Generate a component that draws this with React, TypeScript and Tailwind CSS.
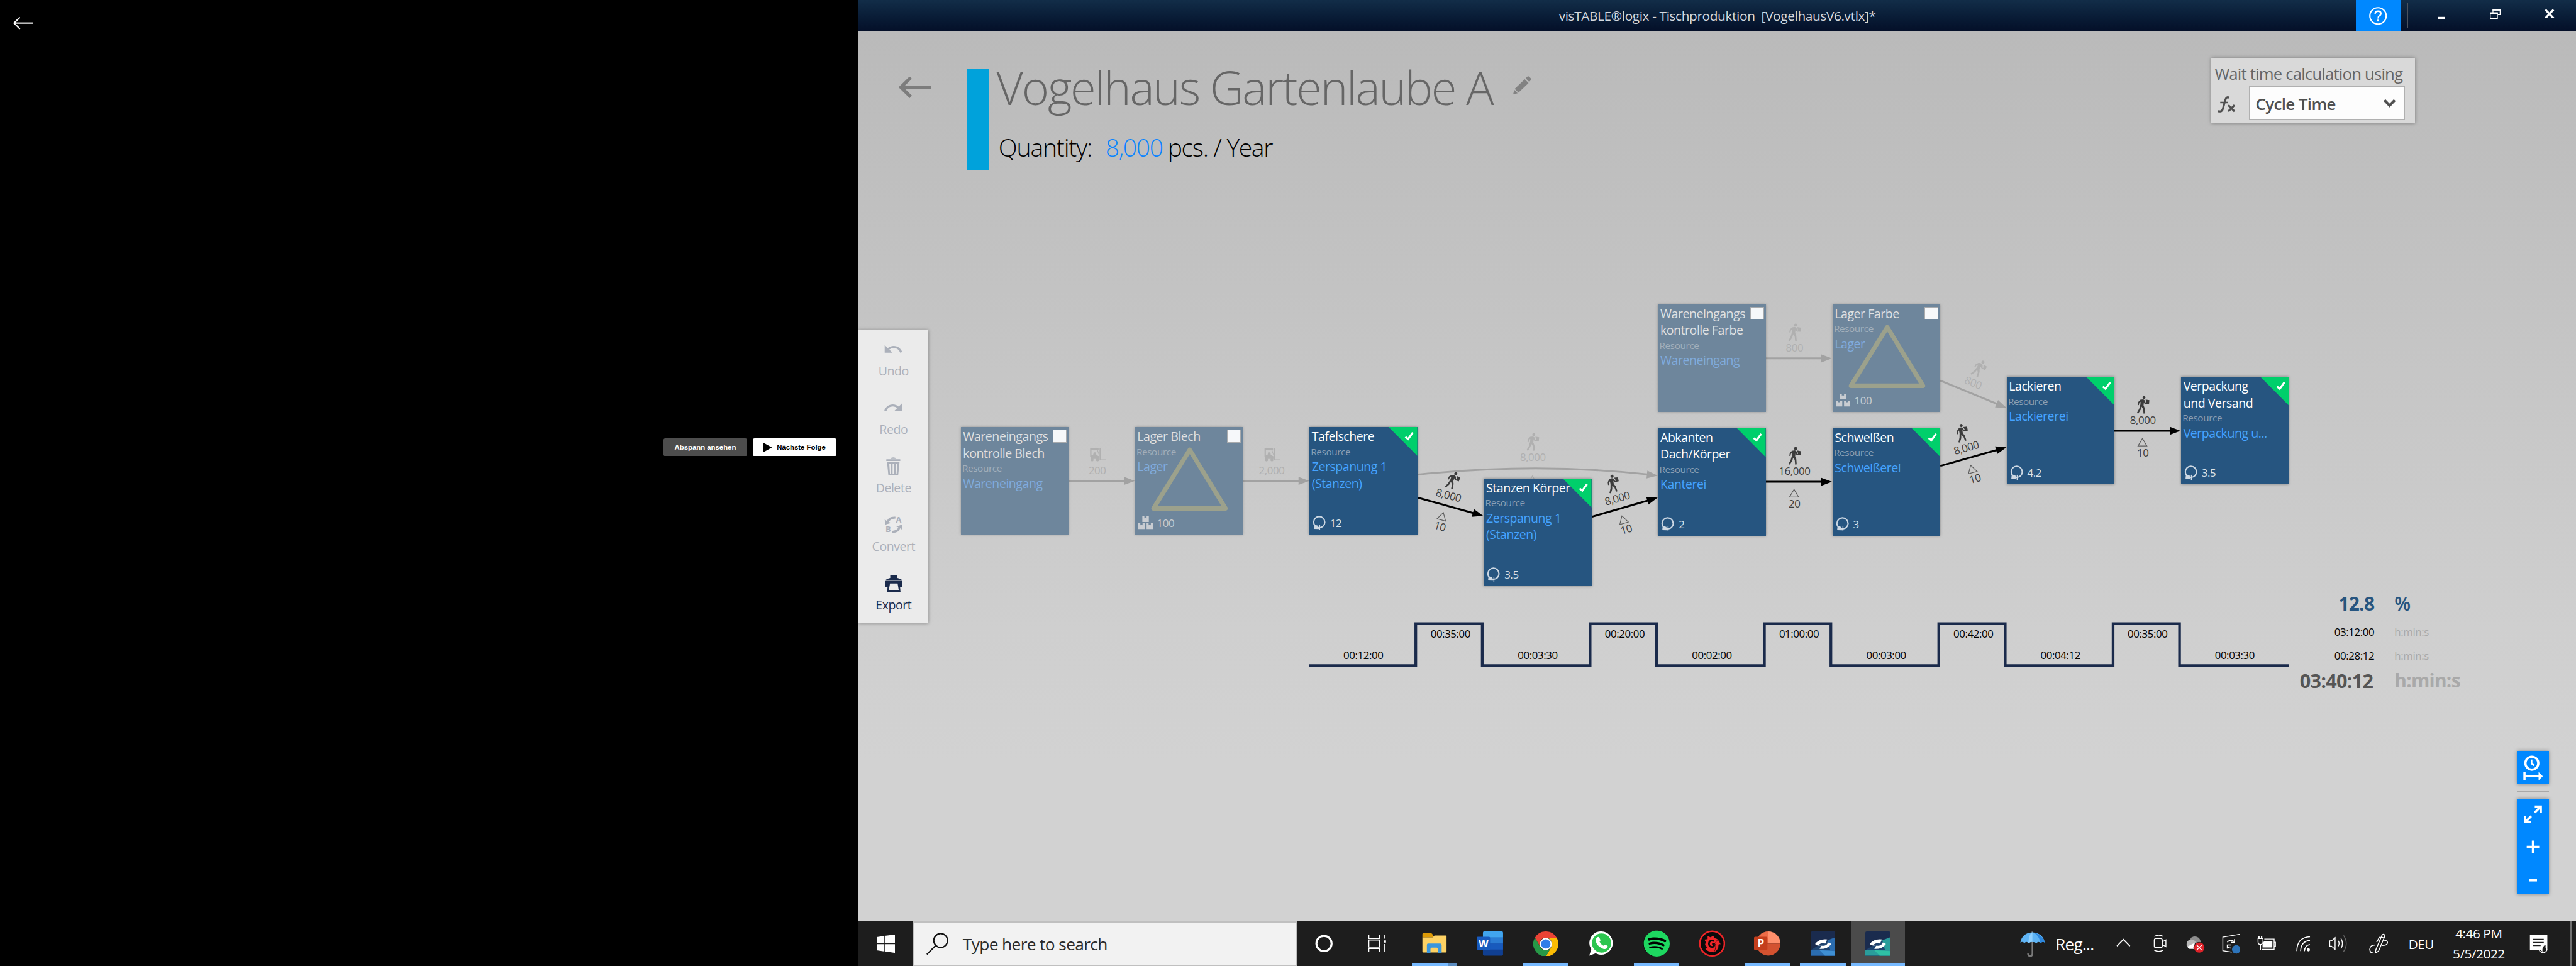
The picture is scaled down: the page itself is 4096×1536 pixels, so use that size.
import React from 'react';
import { MdUndo, MdRedo } from 'react-icons/md';
import { FaSpotify } from 'react-icons/fa';

/* ---------- data ---------- */

type FlowNode = {
  x: number;
  y: number;
  title: string[];
  resource: string[];
  kind: 'active' | 'dim' | 'stock';
  value?: string;
};

const NODES: FlowNode[] = [
  { x: 2148.5, y: 954.5, title: ['Wareneingangs', 'kontrolle Blech'], resource: ['Wareneingang'], kind: 'dim' },
  { x: 2538, y: 954.5, title: ['Lager Blech'], resource: ['Lager'], kind: 'stock', value: '100' },
  { x: 2928, y: 954.5, title: ['Tafelschere'], resource: ['Zerspanung 1', '(Stanzen)'], kind: 'active', value: '12' },
  { x: 3318, y: 1069.5, title: ['Stanzen Körper'], resource: ['Zerspanung 1', '(Stanzen)'], kind: 'active', value: '3.5' },
  { x: 3707.5, y: 680, title: ['Wareneingangs', 'kontrolle Farbe'], resource: ['Wareneingang'], kind: 'dim' },
  { x: 4097.5, y: 680, title: ['Lager Farbe'], resource: ['Lager'], kind: 'stock', value: '100' },
  { x: 3707.5, y: 957, title: ['Abkanten', 'Dach/Körper'], resource: ['Kanterei'], kind: 'active', value: '2' },
  { x: 4097.5, y: 957, title: ['Schweißen'], resource: ['Schweißerei'], kind: 'active', value: '3' },
  { x: 4487, y: 842, title: ['Lackieren'], resource: ['Lackiererei'], kind: 'active', value: '4.2' },
  { x: 4877, y: 842, title: ['Verpackung', 'und Versand'], resource: ['Verpackung u...'], kind: 'active', value: '3.5' },
];

type Edge = {
  from: [number, number];
  to: [number, number];
  label: string;
  batch?: string;
  dim?: boolean;
  lift?: boolean;
};

const EDGES: Edge[] = [
  { from: [2390, 1075], to: [2538, 1075], label: '200', dim: true, lift: true },
  { from: [2780, 1075], to: [2928, 1075], label: '2,000', dim: true, lift: true },
  { from: [3949, 801], to: [4097, 801], label: '800', dim: true },
  { from: [4339, 850.5], to: [4487, 911.5], label: '800', dim: true },
  { from: [3169, 1112], to: [3317, 1153], label: '8,000', batch: '10' },
  { from: [3559, 1155.5], to: [3707, 1112.5], label: '8,000', batch: '10' },
  { from: [3949, 1077], to: [4097, 1077], label: '16,000', batch: '20' },
  { from: [4339, 1041.5], to: [4487, 1000], label: '8,000', batch: '10' },
  { from: [4728, 963], to: [4876, 963], label: '8,000', batch: '10' },
];

const TIMES = [
  { t: '00:12:00', high: false },
  { t: '00:35:00', high: true },
  { t: '00:03:30', high: false },
  { t: '00:20:00', high: true },
  { t: '00:02:00', high: false },
  { t: '01:00:00', high: true },
  { t: '00:03:00', high: false },
  { t: '00:42:00', high: true },
  { t: '00:04:12', high: false },
  { t: '00:35:00', high: true },
  { t: '00:03:30', high: false },
];

/* ---------- diagram icons ---------- */

const Walker = () => (
  <g>
    <circle cx="16" cy="3.6" r="3.4" />
    <path d="M8 8.5 L14.5 7.5 L18 10 L19.5 15 L22 16.5 L21 18.5 L17 17 L15.8 14 L15 21 L17.5 27 L18.5 39 L15 39.5 L14 29 L10.5 24 L8.5 31 L3 39.5 L0 38 L5 29 L8 19 L8.2 13 L5.5 15.5 L4.5 20.5 L2 20 L3 13.5 Z" />
    <path d="M19.5 8 L28 9.5 L27.2 18.5 L20.8 18 L21.5 15.2 Z" />
  </g>
);

const Lift = () => (
  <g>
    <path d="M1 1 H20 V4 H18 L22 17 H21 L16 4 H4 V20 H1 Z" />
    <path d="M22 0 H25 V26 H36 V28 H22 Z" />
    <path d="M2 18 L8 15 L9 10 H14 L15 16 L21 19 V25 H2 Z" />
    <circle cx="5.5" cy="27" r="3.4" />
    <circle cx="17.5" cy="27" r="3.4" />
  </g>
);

function EdgeMark({ e }: { e: Edge }) {
  const [x1, y1] = e.from;
  const [x2, y2] = e.to;
  const len = Math.hypot(x2 - x1, y2 - y1);
  const deg = (Math.atan2(y2 - y1, x2 - x1) * 180) / Math.PI;
  const mid = len / 2 - 10;
  const line = e.dim ? '#a2a2a2' : '#000000';
  return (
    <g transform={`translate(${x1} ${y1}) rotate(${deg})`}>
      <path d={`M0 0 H${len - 22}`} stroke={line} strokeWidth="4.2" />
      <path d={`M${len} 0 L${len - 24} -9 V9 Z`} fill={line} />
      <g fill={e.dim ? '#b0b0b0' : '#3c3c3c'}>
        <g transform={e.lift ? `translate(${mid - 17} -74)` : `translate(${mid - 13.5} -78)`}>
          {e.lift ? <Lift /> : <Walker />}
        </g>
        <text x={mid} y="-15" textAnchor="middle" className="text-[23.7px]">
          {e.label}
        </text>
      </g>
      {e.batch && (
        <g>
          <path
            d={`M${mid - 1} 17 L${mid + 9} 34 L${mid - 11} 34 Z`}
            fill="none"
            stroke="#5c5c5c"
            strokeWidth="1.7"
          />
          <text x={mid} y="57" textAnchor="middle" fill="#3c3c3c" className="text-[23.7px]">
            {e.batch}
          </text>
        </g>
      )}
    </g>
  );
}

const timelinePath = () => {
  let d = 'M2928 1488';
  for (let i = 0; i < 5; i++) {
    const nx = 2928 + 389.8 * i;
    d += ` H${nx + 238.2} V1394 H${nx + 386.8} V1488`;
  }
  return d + ' H5118';
};

function NodeCard({ n }: { n: FlowNode }) {
  const active = n.kind === 'active';
  return (
    <div
      className={
        active
          ? 'absolute h-[241px] w-[241px] bg-[#265580] shadow-[0_0_6px_rgba(0,0,0,0.35)]'
          : 'absolute h-[241px] w-[241px] bg-[#6e869c] shadow-[0_0_6px_rgba(0,0,0,0.25)]'
      }
      style={{ left: n.x - 1920, top: n.y - 70 }}
    >
      {n.kind === 'stock' && (
        <svg className="absolute inset-0" width="241" height="241" fill="none">
          <path d="M122 51 L202 182 H41 Z" stroke="#9ca18c" strokeWidth="10" strokeLinejoin="round" />
        </svg>
      )}
      {active ? (
        <svg className="absolute top-0 right-0" width="64" height="65">
          <path d="M0 0 H64 V64.500 Z" fill="#00cf6b" />
          <path d="M37.500 22 L43.500 27 L54 12.500" fill="none" stroke="#fff" strokeWidth="4.500" />
        </svg>
      ) : (
        <div className="absolute top-[6px] right-[4px] h-[29px] w-[31px] border-2 border-[#a9abad] bg-[#f6f8fa]" />
      )}
      <div className="relative flex flex-col pt-[3px] whitespace-nowrap">
        <div className={active ? 'pl-[5px] text-[27.500px] leading-[37.500px] text-white' : 'pl-[5px] text-[27.500px] leading-[37.500px] text-[#e0e1e2]'}>
          {n.title.map((t) => (
            <div key={t}>{t}</div>
          ))}
        </div>
        <div className={active ? 'pl-[3px] text-[21.500px] leading-[29px] text-[#8a9fb4]' : 'pl-[3px] text-[21.500px] leading-[29px] text-[#a2afbb]'}>
          Resource
        </div>
        <div className={active ? 'pt-px pl-[5px] text-[27.500px] leading-[37.500px] text-[#45a3ff]' : 'pt-px pl-[5px] text-[27.500px] leading-[37.500px] text-[#80abdc]'}>
          {n.resource.map((t) => (
            <div key={t}>{t}</div>
          ))}
        </div>
      </div>
      {n.value && (
        <div className="absolute bottom-[8px] left-[7px] flex h-[36px] items-center gap-[9px]">
          {active ? (
            <svg width="30" height="33" viewBox="0 0 30 33" className="shrink-0">
              <circle cx="15" cy="14.500" r="12.500" fill="none" stroke="#cdd8e3" strokeWidth="3" />
              <path d="M4 20 L12 22 L14.500 30 L3 29.500 Z" fill="#cdd8e3" />
              <path d="M16 21 V32.500" stroke="#cdd8e3" strokeWidth="2" />
            </svg>
          ) : (
            <svg width="33" height="29" viewBox="0 0 33 29" className="shrink-0" fill="#c9cdd2">
              <path d="M9 0 H13.500 V4.500 L16 3 L18.500 4.500 V0 H23.500 V12.500 H9 Z" />
              <path d="M0 15.500 H4.500 V20 L7 18.500 L9.500 20 V15.500 H14.500 V28.500 H0 Z" />
              <path d="M18.500 15.500 H23 V20 L25.500 18.500 L28 20 V15.500 H33 V28.500 H18.500 Z" />
            </svg>
          )}
          <span className={active ? 'text-[23.700px] leading-[36px] text-[#dbe3ea]' : 'text-[23.700px] leading-[36px] text-[#c9cdd1]'}>
            {n.value}
          </span>
        </div>
      )}
    </div>
  );
}

function Canvas() {
  return (
    <div className="absolute inset-0">
      <svg className="absolute inset-0" width="3840" height="1990" viewBox="1920 70 3840 1990">
        <path d="M3169 1061 Q3438 1033 3690 1061" fill="none" stroke="#a2a2a2" strokeWidth="4" />
        <path d="M3707 1063 L3684 1052 L3682 1069.500 Z" fill="#a2a2a2" />
        <g fill="#b0b0b0">
          <g transform="translate(3414 968)">
            <Walker />
          </g>
          <text x="3428" y="1031" textAnchor="middle" className="text-[23.7px]">
            8,000
          </text>
          <path d="M3427 1064 L3437 1081 H3417 Z" fill="none" stroke="#b0b0b0" strokeWidth="1.800" />
        </g>
        {EDGES.map((e, i) => (
          <EdgeMark key={i} e={e} />
        ))}
        <path d={timelinePath()} fill="none" stroke="#1a2a4b" strokeWidth="6" />
      </svg>

      {NODES.map((n, i) => (
        <NodeCard key={i} n={n} />
      ))}

      <div className="absolute top-[1331px] left-[1008px] flex h-[84px] text-[23.700px] leading-[35px] text-black">
        {TIMES.map((s, i) =>
          s.high ? (
            <div key={i} className="w-[148.700px] text-center">
              {s.t}
            </div>
          ) : (
            <div key={i} className="w-[241px] pt-[48px] text-center">
              {s.t}
            </div>
          ),
        )}
      </div>

      <div className="absolute top-[1250px] left-[3189px] grid grid-cols-[200px_200px] gap-x-[45px] whitespace-nowrap">
        <div className="mb-[7px] text-right text-[42px] leading-[60px] font-bold text-[#265580]">12.8</div>
        <div className="mb-[7px] text-[42px] leading-[60px] font-semibold text-[#265580]">%</div>
        <div className="text-right text-[23.700px] leading-[52.500px] text-black">03:12:00</div>
        <div className="text-[23.700px] leading-[52.500px] text-[#a9a9a9]">h:min:s</div>
        <div className="text-right text-[23.700px] leading-[52.500px] text-black">00:28:12</div>
        <div className="text-[23.700px] leading-[52.500px] text-[#a9a9a9]">h:min:s</div>
        <div className="pr-[3px] text-right text-[43px] leading-[60px] font-bold text-[#555555]">03:40:12</div>
        <div className="text-[42px] leading-[60px] font-bold text-[#a9a9a9]">h:min:s</div>
      </div>
    </div>
  );
}

/* ---------- tool strip ---------- */

const TrashIcon = () => (
  <svg width="32" height="40" viewBox="0 0 32 40" fill="#abb0ba">
    <path d="M11 1.500 Q16 -1 21 1.500 V4 H11 Z" />
    <rect x="0" y="4.500" width="32" height="4" rx="1.500" />
    <path fillRule="evenodd" d="M2 10.500 H30 L27 40 H5 Z M7 14 L8.500 36.500 H10.500 L10 14 Z M14.500 14 V36.500 H17.500 V14 Z M22 14 L21.500 36.500 H23.500 L25 14 Z" />
  </svg>
);

const ConvertIcon = () => (
  <svg width="56" height="60" viewBox="-8 -12 56 60" fill="#abb0ba" className="shrink-0">
    <path d="M24 0 Q8 -1 5.500 10 L0 6 L1.500 18 L14 14 L9.500 12 Q12 5 24 4 Z" />
    <path d="M16 36 Q32 37 34.500 26 L40 30 L38.500 18 L26 22 L30.500 24 Q28 31 16 32 Z" />
    <text x="25" y="13.500" className="text-[18px] font-bold">A</text>
    <text x="2" y="34.500" className="text-[18px] font-bold">B</text>
  </svg>
);

const PrinterIcon = () => (
  <svg width="40" height="37" viewBox="0 0 40 37" fill="#1a2a4b">
    <path d="M12 0 H28 V5.500 Q35 6.500 38 10 H2 Q5 6.500 12 5.500 Z" />
    <path fillRule="evenodd" d="M3 12 H37 Q40 12 40 15 V24 Q40 26 37 26 H34 L35 36.500 H5 L6 26 H3 Q0 26 0 24 V15 Q0 12 3 12 Z M11.500 18 L9 32.500 H31 L28.500 18 Z" />
  </svg>
);

const TOOLS = [
  { label: 'Undo', icon: <MdUndo size={46} />, on: false },
  { label: 'Redo', icon: <MdRedo size={46} />, on: false },
  { label: 'Delete', icon: <TrashIcon />, on: false },
  { label: 'Convert', icon: <ConvertIcon />, on: false },
  { label: 'Export', icon: <PrinterIcon />, on: true },
];

function ToolStrip() {
  return (
    <div className="flex h-[655px] w-[156px] shrink-0 flex-col bg-[#ebebeb] shadow-[0_0_8px_rgba(0,0,0,0.35)]">
      {TOOLS.map((t) => (
        <div
          key={t.label}
          className={t.on ? 'flex h-[131px] flex-col items-center text-[#1a2a4b]' : 'flex h-[131px] flex-col items-center text-[#abb0ba]'}
        >
          <div className="mt-[20px] flex h-[46px] items-center justify-center">{t.icon}</div>
          <div className="mt-[7px] text-[27.500px] leading-[36px]">{t.label}</div>
        </div>
      ))}
    </div>
  );
}

/* ---------- chrome ---------- */

function TitleBar() {
  return (
    <div className="flex h-[70px] shrink-0 items-center bg-linear-to-b from-[#122d48] to-[#040f28] text-white">
      <div className="w-[492px] shrink-0" />
      <div className="flex-1 pt-[2px] text-center text-[29.300px] whitespace-pre text-[#d5d9de]">
        <span className="tracking-[-0.018em]!">{'visTABLE®logix - Tischproduktion  [VogelhausV6.vtlx]*'}</span>
      </div>
      <div className="flex w-[492px] shrink-0 items-center">
        <div className="flex h-[70px] w-[100px] items-center justify-center bg-[#0088ff]">
          <svg width="40" height="40" viewBox="0 0 40 40" fill="none" stroke="#fff">
            <circle cx="20" cy="20" r="18.300" strokeWidth="3" />
            <path d="M13.500 15.500 Q13.500 9.500 20 9.500 Q26.500 9.500 26.500 15 Q26.500 18 22.500 20 Q20 21.500 20 26" strokeWidth="3.200" />
            <path d="M20 28.500 V32.500" strokeWidth="3.600" />
          </svg>
        </div>
        <div className="ml-[15px] h-[55px] w-[2px] bg-[#4b525d]" />
        <svg className="ml-[67px]" width="16" height="30" viewBox="0 0 16 30">
          <rect x="0" y="18" width="16" height="4.500" fill="#fff" />
        </svg>
        <svg className="mt-[-8px] ml-[100px]" width="24" height="24" viewBox="0 0 24 24" fill="none" stroke="#fff">
          <path d="M7 9 V2.500 H23 V13 H18" strokeWidth="1.800" />
          <path d="M6 2 H24" strokeWidth="4" />
          <path d="M1 9 H17 V21.500 H1 Z" strokeWidth="1.800" />
          <path d="M0 10 H18" strokeWidth="4" />
        </svg>
        <svg className="mt-[-9px] ml-[98px]" width="22" height="20" viewBox="0 0 22 20" stroke="#fff" strokeWidth="4.500">
          <path d="M2 0.500 L20 19.500 M20 0.500 L2 19.500" />
        </svg>
      </div>
    </div>
  );
}

function Header() {
  return (
    <div className="flex h-[330px] items-start pt-[60px]">
      <svg className="mt-[42px] ml-[90px] shrink-0" width="72" height="47" viewBox="0 0 72 47" fill="none" stroke="#7d7d7d" strokeWidth="7.500">
        <path d="M4 23.500 H72" />
        <path d="M27 2 L5 23.500 L27 45" />
      </svg>
      <div className="mt-[25px] ml-[79px] h-[226px] w-[50px] shrink-0 bg-[#00a2db]" />
      <div className="mt-[25px] ml-[17px] flex flex-col whitespace-nowrap">
        <div className="flex items-start">
          <h1 className="w-[1156px] pt-[2px] text-[104px] leading-[75px] font-light tracking-[-0.030em]! text-[#666666]">Vogelhaus Gartenlaube A</h1>
          <svg className="mt-[15px] shrink-0" width="41" height="41" viewBox="0 0 41 41" fill="#828282">
            <path d="M32 1 Q34 -0.500 36 1.500 L40 5.500 Q41 7.500 39.500 9 L36 13 L28 5 Z" />
            <path d="M26 7 L34.500 15.500 L12 37 L3.500 28.500 Z" />
            <path d="M2.500 30.500 L10 38.500 L0 41 Z" />
          </svg>
        </div>
        <div className="mt-[68px] flex pl-[5px] text-[55px] leading-[60px] font-light text-black">
          <span className="w-[239px] tracking-[-0.031em]!">Quantity:</span>
          <span className="w-[139px] tracking-[-0.034em]! text-[#0a84ff]">8,000</span>
          <span className="tracking-[-0.034em]!">pcs. / Year</span>
        </div>
      </div>
      <div className="mr-[360px] ml-auto flex h-[146px] w-[456px] flex-col bg-[#d9d9d9] pl-[8px] shadow-[0_0_8px_rgba(0,0,0,0.35)]">
        <div className="mt-[10px] text-[36.200px] leading-[50px] tracking-[-0.032em]! whitespace-nowrap text-[#666666]">
          Wait time calculation using
        </div>
        <div className="mt-[3px] flex items-start">
          <svg className="mt-[22px] ml-[7px] shrink-0" width="40" height="37" viewBox="0 0 40 37" fill="none" stroke="#505050">
            <path d="M26 3.500 Q20 0 17.500 8 L12 28 Q9.500 36 1 33.500" strokeWidth="4.500" />
            <path d="M6 14 H23" strokeWidth="3.500" />
            <path d="M24 20 L38 34 M38 20 L24 34" strokeWidth="4.500" />
          </svg>
          <div className="ml-[30px] flex h-[75px] w-[349px] items-center justify-between border-2 border-[#b0b0b0] bg-[#fdfdfd] pr-[20px] pl-[13px]">
            <span className="pt-[4px] text-[36.500px] font-semibold whitespace-nowrap text-[#505050]">Cycle Time</span>
            <svg width="27" height="20" viewBox="0 0 27 20" fill="none" stroke="#505050" strokeWidth="6">
              <path d="M2 3 L13.500 15 L25 3" />
            </svg>
          </div>
        </div>
      </div>
    </div>
  );
}

function ZoomControls() {
  return (
    <div className="mr-[60px] ml-auto flex w-[72px] flex-col">
      <div className="flex h-[75px] items-start justify-center bg-[#0088ff] shadow-[0_0_8px_rgba(0,0,0,0.35)]">
        <svg width="72" height="75" viewBox="0 0 72 75" fill="none" stroke="#fff">
          <circle cx="33.500" cy="27.500" r="14.500" strokeWidth="5" />
          <path d="M33 19.500 V28.500 L39 32.500" strokeWidth="3.500" />
          <path d="M17 47 V66" strokeWidth="5" />
          <path d="M17 56.500 H50" strokeWidth="4.500" />
          <path d="M48.500 47 L58 56.500 L48.500 66 Z" fill="#fff" stroke="none" />
        </svg>
      </div>
      <div className="mt-[15px] h-[2px] bg-[#a8a8a8]" />
      <div className="mt-[15px] flex h-[214px] flex-col bg-[#0088ff] shadow-[0_0_8px_rgba(0,0,0,0.35)]">
        <svg width="72" height="214" viewBox="0 0 72 214" fill="none" stroke="#fff" strokeWidth="5">
          <path d="M40 17.500 H53.500 V31 M53 18 L40 31" />
          <path d="M18.500 39 V52.500 H32 M19 52 L32 39" />
          <path d="M22 107.500 H50 M36 93.500 V122" />
          <path d="M28 182.500 H45" />
        </svg>
      </div>
    </div>
  );
}

/* ---------- taskbar ---------- */

const Explorer = () => (
  <svg width="56" height="46" viewBox="0 0 56 46">
    <path d="M1 2 Q1 0 3 0 H20 Q23 0 24 3 L27 9 H1 Z" fill="#dd9a06" />
    <path d="M1 9 H24 L28 5 H53 Q55 5 55 7 V41 Q55 43 53 43 H3 Q1 43 1 41 Z" fill="#fdd264" />
    <path d="M11 45 V26 Q11 23 14 23 H41 Q44 23 44 26 V45 H36 V35 Q36 32 33 32 H22 Q19 32 19 35 V45 Z" fill="#3a96dd" />
  </svg>
);

const Word = () => (
  <svg width="60" height="54" viewBox="0 0 60 54">
    <rect x="14" width="45" height="54" rx="3" fill="#103f91" />
    <path d="M14 27 H59 V40.500 H14 Z" fill="#185abd" />
    <path d="M14 13 H59 V27 H14 Z" fill="#2b7cd3" />
    <path d="M14 13.500 V3 Q14 0 17 0 H56 Q59 0 59 3 V13.500 Z" fill="#41a5ee" />
    <rect y="12" width="30" height="30" rx="2.500" fill="#185abd" />
    <text x="15" y="35" textAnchor="middle" fill="#fff" className="text-[23px] font-bold">W</text>
  </svg>
);

const Chrome = () => (
  <svg width="56" height="56" viewBox="0 0 48 48">
    <path d="M3.200 12 A24 24 0 0 1 44.800 12 H24 A12 12 0 0 0 13.600 30 Z" fill="#ea4335" />
    <path d="M44.800 12 A24 24 0 0 1 24 48 L34.400 30 A12 12 0 0 0 24 12 Z" fill="#fbbc04" />
    <path d="M24 48 A24 24 0 0 1 3.200 12 L13.600 30 A12 12 0 0 0 34.400 30 Z" fill="#279847" />
    <circle cx="24" cy="24" r="11.500" fill="#fff" />
    <circle cx="24" cy="24" r="9" fill="#2f7de9" />
  </svg>
);

const WhatsApp = () => (
  <svg width="54" height="54" viewBox="0 0 54 54">
    <path d="M27.500 0 A26 26 0 1 1 14.500 49 L0 54 L4.500 40 A26 26 0 0 1 27.500 0 Z" fill="#fff" />
    <circle cx="27.500" cy="26" r="21.500" fill="#2cc64f" />
    <path d="M18 13 Q20 11.500 22 13 L25 19 Q25.500 21 23 23 Q25.500 29 31.500 32 L34.500 29.500 Q36 29 41 32.500 Q42 35 39 38 Q35 41 28 37.500 Q17 32 14.500 22 Q14 16 18 13 Z" fill="#fff" />
  </svg>
);

const Spotify = () => (
  <div className="flex h-[58px] w-[58px] items-center justify-center rounded-full bg-black">
    <FaSpotify size={60} color="#1ed760" className="shrink-0" />
  </div>
);

const RedApp = () => (
  <svg width="60" height="60" viewBox="0 0 60 60">
    <circle cx="30" cy="30" r="27.500" fill="#0a0a0a" stroke="#ee2528" strokeWidth="3.500" />
    <path d="M20 13 L27 16 L32 12 L36 18 L42 20 L41 27 H46 L44 33 Q46 44 33 48 Q22 50 15 42 L19 38 L14 33 L16 27 L13 21 L20 20 Z" fill="#ee2528" />
    <path d="M34 24 Q24 21 23 30 Q23 38 31 37.500 Q35 37 35 31 H30" fill="none" stroke="#0a0a0a" strokeWidth="4" />
    <path d="M43 20 L50 32 H45 Q45 46 32 51 Q39 44 38 32 H35 Z" fill="#ee2528" stroke="#0a0a0a" strokeWidth="1" />
  </svg>
);

const PowerPoint = () => (
  <svg width="60" height="54" viewBox="0 0 60 54">
    <path d="M32 0 A27 27 0 0 0 5 27 H32 Z" fill="#ed6c47" />
    <path d="M32 0 A27 27 0 0 1 59 27 H32 Z" fill="#ff8f6b" />
    <path d="M5 27 A27 27 0 0 0 59 27 Z" fill="#d35230" />
    <rect y="12" width="30" height="30" rx="2.500" fill="#c43e1c" />
    <text x="15" y="35.500" textAnchor="middle" fill="#fff" className="text-[24px] font-bold">P</text>
  </svg>
);

function Logix({ accent, light }: { accent: string; light: string }) {
  return (
    <svg width="56" height="56" viewBox="0 0 56 56">
      <rect width="56" height="56" rx="3" fill="#1a2b4e" />
      <path d="M56 13 L36 20 L0 42 V54 H56 Z" fill="#1f4470" />
      <path d="M56 13 L38 20 L44 42 H56 Z" fill={accent} />
      <path d="M0 42 H56 V54 H0 Z" fill={accent} />
      <path d="M20 42 L56 44 V54 H32 Z" fill={light} />
      <path d="M10 28 Q20 16 37 18 L33 27 Q22 25 18 31 L24 31 Q14 33 10 28 Z" fill="#fff" />
      <path d="M46 28 Q38 40 20 39 L24 32 Q34 33 38 27 L33 26 Q42 23 46 28 Z" fill="#fff" />
    </svg>
  );
}

const APPS: { icon: React.ReactNode; state: 'idle' | 'open' | 'stack' | 'focus' }[] = [
  { icon: <Explorer />, state: 'stack' },
  { icon: <Word />, state: 'idle' },
  { icon: <Chrome />, state: 'open' },
  { icon: <WhatsApp />, state: 'idle' },
  { icon: <Spotify />, state: 'open' },
  { icon: <RedApp />, state: 'idle' },
  { icon: <PowerPoint />, state: 'open' },
  { icon: <Logix accent="#2b6cae" light="#3f8fd2" />, state: 'open' },
  { icon: <Logix accent="#2a9d9b" light="#2fc0a5" />, state: 'focus' },
];

function Taskbar() {
  return (
    <div className="flex h-[100px] shrink-0 items-center bg-[#1d1d1d] text-white">
      <div className="flex h-full w-[121px] shrink-0 items-center justify-center">
        <svg width="41" height="41" viewBox="0 0 41 41" fill="#fff">
          <path d="M0 5.500 L16 3.200 V19.300 H0 Z M18 2.900 L41 0 V19.300 H18 Z M0 21.300 H16 V37.500 L0 35.300 Z M18 21.300 H41 V41 L18 37.800 Z" />
        </svg>
      </div>
      <div className="flex h-full w-[859px] shrink-0 items-center border-[3px] border-[#c0c0c0] bg-[#f2f2f2] pl-[28px]">
        <svg width="50" height="50" viewBox="0 0 50 50" fill="none" stroke="#111" strokeWidth="3">
          <circle cx="32" cy="17.500" r="15.500" />
          <path d="M21 28.500 L1 48.500" />
        </svg>
        <span className="pt-[4px] pl-[31px] text-[37px] whitespace-nowrap text-[#2b2b2b]">Type here to search</span>
      </div>
      <div className="flex w-[120px] shrink-0 justify-center">
        <svg width="40" height="40" viewBox="0 0 40 40" fill="none" stroke="#fff" strokeWidth="4.500">
          <circle cx="20" cy="20" r="17" />
        </svg>
      </div>
      <div className="flex w-[126px] shrink-0 pl-[39px]">
        <svg width="42" height="40" viewBox="0 0 42 40" fill="none" stroke="#fff" strokeWidth="2.500">
          <path d="M2 1 V8.500 H26 V1 M2 39 V31 H26 V39 M2 12 H26 V28 H2 Z M38 0 V9 M38 21 V39" />
          <rect x="36" y="13" width="4.500" height="5" fill="#fff" stroke="none" />
        </svg>
      </div>
      {APPS.map((a, i) => (
        <div
          key={i}
          className={
            a.state === 'focus'
              ? 'relative mr-px ml-px flex h-full w-[121px] shrink-0 items-center justify-center bg-[#4b4b4b]'
              : 'relative flex h-full w-[124px] shrink-0 items-center justify-center'
          }
        >
          {a.icon}
          {a.state === 'focus' && <div className="absolute right-0 bottom-0 left-0 h-[5px] bg-[#76b9ff]" />}
          {a.state === 'open' && <div className="absolute right-[11px] bottom-0 left-[11px] h-[5px] bg-[#76b9ff]" />}
          {a.state === 'stack' && (
            <div className="absolute right-[11px] bottom-0 left-[11px] flex h-[5px]">
              <div className="flex-1 bg-[#76b9ff]" />
              <div className="w-[22px] bg-[#5b8cc0]" />
            </div>
          )}
        </div>
      ))}

      <svg className="ml-[254px] shrink-0" width="60" height="60" viewBox="0 0 60 60">
        <path d="M29 3 V52 Q29 58 24 58 Q19 58 19 51" fill="none" stroke="#7a7a7a" strokeWidth="3.500" />
        <path d="M2 28 Q6 6 29 5 Q52 6 57 28 Q52 24 47 29 Q43 24 38 29 Q29 24 20 29 Q16 24 11 29 Q7 24 2 28 Z" fill="#5fb4f4" />
        <path d="M29 5 Q21 8 20 29 Q29 24 29 27 Z" fill="#8fd0ff" />
        <path d="M29 5 Q50 8 57 28 Q52 24 47 29 Q44 10 29 5 Z" fill="#2c86dd" />
      </svg>
      <div className="ml-[21px] w-[100px] shrink-0 pt-[2px] text-[36.500px] whitespace-nowrap">Reg...</div>
      <svg className="ml-[36px] shrink-0" width="32" height="40" viewBox="0 0 32 40" fill="none" stroke="#fff" strokeWidth="2.500">
        <path d="M1.500 26 L16 11 L30.500 26" />
      </svg>
      <svg className="ml-[51px] shrink-0" width="30" height="40" viewBox="0 0 30 40" fill="none" stroke="#fff" strokeWidth="2">
        <rect x="2" y="9" width="18" height="20" rx="3.500" />
        <path d="M20 16.500 L28 12 V27 L20 22.500 M2 4 Q12 -1 22 4 M2 35 Q12 40 22 35" />
      </svg>
      <svg className="ml-[43px] shrink-0" width="42" height="40" viewBox="0 0 42 40">
        <path d="M8 12 Q14 2 24 5 Q33 8 33 20 L20 18 Z" fill="#8d8d8d" />
        <path d="M1 24 Q0 12 12 11 Q18 11 22 17 L4 28 Z" fill="#b8b8b8" />
        <path d="M3 27 L20 18 V32 H8 Q4 31 3 27 Z" fill="#fff" />
        <circle cx="29" cy="29" r="12.500" fill="#1d1d1d" />
        <circle cx="29.500" cy="29" r="11.500" fill="#e02229" />
        <path d="M24 23.500 L35 34.500 M35 23.500 L24 34.500" stroke="#fff" strokeWidth="2" />
      </svg>
      <svg className="ml-[38px] shrink-0" width="42" height="46" viewBox="0 0 42 46" fill="none" stroke="#fff" strokeWidth="2">
        <path d="M41 28 V2 L2 8.500 V39 L22 42" />
        <path d="M12 20 Q18 12 27 18 M28 13 V20 H20 M20 33 Q13 33 12 27 M20 26 H12 V34" />
        <circle cx="32" cy="36" r="9.500" fill="#2d74ba" stroke="none" />
      </svg>
      <svg className="ml-[38px] shrink-0" width="42" height="40" viewBox="0 0 42 40" fill="none" stroke="#fff" strokeWidth="2">
        <path d="M16 10 H38 V33 H11" />
        <path d="M12 29 V22 L15 15 H34 V29 Z" fill="#fff" stroke="none" />
        <path d="M38 17 H41 V26 H38" />
        <path d="M4 3 V8 M10 3 V8" strokeWidth="3" />
        <path d="M2 9 H13 V17 Q12 22 7.500 22 Q2 22 2 16 Z M7.500 22 V34" />
      </svg>
      <svg className="ml-[45px] shrink-0" width="32" height="40" viewBox="0 0 32 40" fill="none" stroke="#fff" strokeWidth="2.200">
        <path d="M1.500 37 Q2 6 31 5 M10 37 Q11 14 31 13.500 M18.500 37 Q20 23 31 22.500" />
        <circle cx="27.500" cy="34" r="3.500" fill="#fff" stroke="none" />
      </svg>
      <svg className="ml-[41px] shrink-0" width="42" height="40" viewBox="0 0 42 40" fill="none" stroke="#fff" strokeWidth="2">
        <path d="M2 14 H6 L14 7 V33 L6 26 H2 Z M21 14 Q25 20 21 26 M27 8.500 Q34 20 27 31.500" />
        <path d="M33 2 Q45 20 33 38" stroke="#6a6a6a" />
      </svg>
      <svg className="ml-[48px] shrink-0" width="42" height="46" viewBox="0 0 42 46" fill="none" stroke="#fff" strokeWidth="2.200">
        <path d="M15 37 L29 4 Q31 1 34 3 Q36 5 35 7 L21 40 L14 44 Z M27 8 L34 11 M17 20 L23 9 L26 10" />
        <path d="M14 26 Q2 26 1.500 36 Q2 44 10 44 M34 16 Q42 16 41 22 Q40 27 29 27" />
      </svg>
      <div className="ml-[46px] w-[56px] shrink-0 pt-[2px] text-[29px] whitespace-nowrap">DEU</div>
      <div className="ml-[41px] w-[120px] shrink-0 text-center text-[29.300px] leading-[46px] whitespace-nowrap">
        <div>4:46 PM</div>
        <div>5/5/2022</div>
      </div>
      <svg className="ml-[53px] shrink-0" width="42" height="42" viewBox="0 0 42 42">
        <path d="M1 1 H40 V34 H18 L10 34 H1 Z" fill="#fff" />
        <path d="M8 10.500 H32 M8 17.500 H32 M8 24.500 H25" stroke="#1d1d1d" strokeWidth="2.200" />
        <path d="M37 20 Q27 27 28 36 L24 33 Q21 33 23 37 Q29 42 34 40 Q42 36 37 29 Z" fill="#1d1d1d" stroke="#fff" strokeWidth="2" />
      </svg>
      <div className="ml-[50px] h-full w-[2px] bg-[#6f6f6f]" />
    </div>
  );
}

function PlayerPane() {
  return (
    <div className="flex h-full w-[1920px] shrink-0 flex-col bg-black">
      <svg className="mt-[37px] ml-[30px] shrink-0" width="44" height="30" viewBox="0 0 44 30" fill="none" stroke="#fff" strokeWidth="3">
        <path d="M2 15 H44" />
        <path d="M15 2 L2 15 L15 28" />
      </svg>
      <div className="mt-[913px] ml-[1484px] flex gap-[13px] font-['Liberation_Sans'] text-[16px] font-bold whitespace-nowrap">
        <div className="flex h-[40px] w-[186px] items-center justify-center rounded-[4px] bg-[#4d4d4d] text-white">Abspann ansehen</div>
        <div className="flex h-[40px] w-[187px] items-center rounded-[4px] bg-white pl-[24px] text-black">
          <svg width="19" height="21" viewBox="0 0 19 21" className="shrink-0">
            <path d="M0 0 L19 10.500 L0 21 Z" />
          </svg>
          <span className="pl-[11px]">Nächste Folge</span>
        </div>
      </div>
    </div>
  );
}

export default function App() {
  return (
    <div className="h-[1536px] w-[4096px] overflow-hidden bg-black">
      <div className="flex h-[2160px] w-[5760px] [zoom:0.711111]">
        <PlayerPane />
        <div className="flex w-[3840px] shrink-0 flex-col font-['Open_Sans','Noto_Sans',sans-serif] [&_*]:tracking-[-0.024em]">
          <TitleBar />
          <div className="relative flex h-[1990px] shrink-0 flex-col bg-linear-to-b from-[#bababa] via-[#cfcfcf] via-67% to-[#d2d2d2] to-82%">
            <Canvas />
            <div className="relative flex flex-col">
              <Header />
              <div className="mt-[338px] flex">
                <ToolStrip />
                <div className="mt-[941px] ml-auto">
                  <ZoomControls />
                </div>
              </div>
            </div>
          </div>
          <Taskbar />
        </div>
      </div>
    </div>
  );
}
